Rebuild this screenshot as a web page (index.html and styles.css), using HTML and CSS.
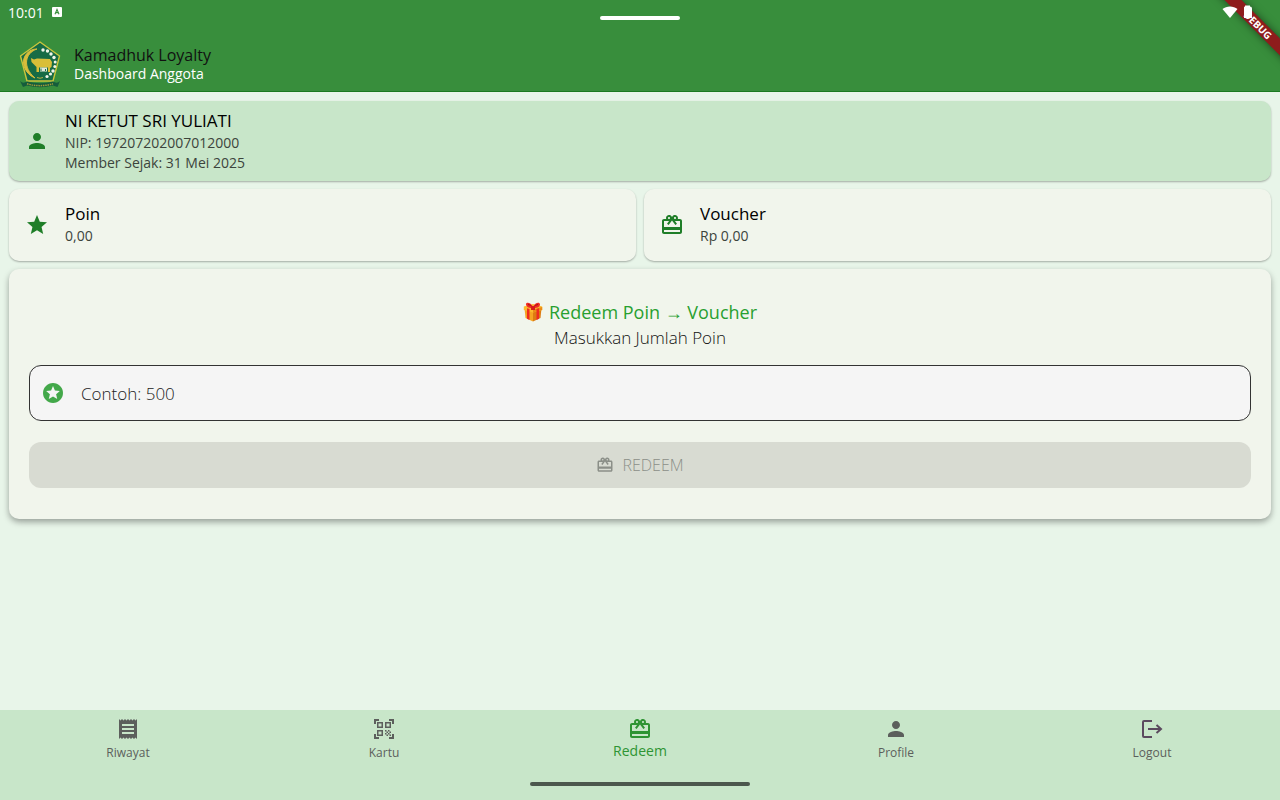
FILE: index.html
```html
<!DOCTYPE html>
<html lang="id">
<head>
  <meta charset="UTF-8">
  <meta name="viewport" content="width=device-width, initial-scale=1">
  <title>Kamadhuk Loyalty</title>
  <link rel="stylesheet" href="styles.css">
</head>
<body>
  <!-- shared icons -->
  <svg class="sprite" width="0" height="0" aria-hidden="true">
    <symbol id="i-person" viewBox="0 0 24 24"><path d="M12 12c2.21 0 4-1.79 4-4s-1.79-4-4-4-4 1.79-4 4 1.79 4 4 4zm0 2c-2.67 0-8 1.34-8 4v2h16v-2c0-2.66-5.33-4-8-4z"/></symbol>
    <symbol id="i-gift" viewBox="0 0 24 24"><path d="M20 6h-2.18c.11-.31.18-.65.18-1 0-1.66-1.34-3-3-3-1.05 0-1.96.54-2.5 1.35l-.5.67-.5-.68C10.96 2.54 10.05 2 9 2 7.34 2 6 3.34 6 5c0 .35.07.69.18 1H4c-1.11 0-1.99.89-1.99 2L2 19c0 1.11.89 2 2 2h16c1.11 0 2-.89 2-2V8c0-1.11-.89-2-2-2zm-5-2c.55 0 1 .45 1 1s-.45 1-1 1-1-.45-1-1 .45-1 1-1zM9 4c.55 0 1 .45 1 1s-.45 1-1 1-1-.45-1-1 .45-1 1-1zm11 15H4v-2h16v2zm0-5H4V8h5.08L7 10.83 8.62 12 12 7.4l3.38 4.6L17 10.83 14.92 8H20v6z"/></symbol>
  </svg>

  <div class="app">
    <header class="appbar">
      <div class="statusbar">
        <span>10:01</span>
        <svg width="10" height="10" viewBox="0 0 10 10"><rect width="10" height="10" rx="1" fill="#fff"/><path d="M3 7.2 5 2.4l2 4.8M3.8 5.6h2.4" fill="none" stroke="#388e3c" stroke-width="1.1"/></svg>
      </div>
      <span class="handle"></span>
      <svg class="sys-icons" width="32" height="14" viewBox="0 0 32 14" fill="#fff">
        <path d="M0.500 4C4.500 0.500 11.500 0.500 15.500 4L8 13z"/>
        <path d="M22 2.500Q22 1.500 23 1.500V.5h5v1q2 0 2 2V13h-8z"/>
      </svg>
      <div class="debug"><span>DEBUG</span></div>

      <div class="brand">
        <svg class="logo" width="42" height="48" viewBox="0 0 42 48">
          <path d="M21 2 40.500 16 34 41H8L1.500 16z" fill="#176b45" stroke="#c9c53c" stroke-width="1.400"/>
          <path d="M18 9C6 13 3 27 16 38C6 34 2 23 6 16C8.500 12 12 9 18 9z" fill="#d8bd3b" stroke="#d8bd3b" stroke-width="1"/>
          <path d="M12 18 15 19.500 18 18.500 31 19 33 22 32.500 27 31 28v4h-2v-4.500H20V32h-2.500v-5L15 24.500 12.500 22z" fill="#d9be38"/>
          <path d="M21 27.500h7v4h-7z" fill="#e4eadc"/>
          <path d="M22 31v-2.500M26.500 31v-2" stroke="#176b45" stroke-width="1"/>
          <g fill="#f1f5e9">
            <circle cx="24" cy="10" r="1.700"/><circle cx="28.500" cy="11" r="1.700"/><circle cx="32" cy="14" r="1.700"/>
            <circle cx="35" cy="17.500" r="1.700"/><circle cx="36.200" cy="22" r="1.500"/><circle cx="35.800" cy="26.500" r="1.500"/>
            <circle cx="34" cy="31" r="1.700"/><circle cx="31.500" cy="34" r="1.600"/><circle cx="28" cy="36.500" r="1.600"/>
          </g>
          <path d="M18 37.500q3 1.500 6 0" fill="none" stroke="#b8af3c"/>
          <path d="M1 41Q4 44 8 41.500Q21 45 34 41.500Q38 44 41 41L38.500 47L34 45.500Q21 49 8 45.500L4 47z" fill="#155c3c"/>
          <path d="M8 43.800Q21 47.500 34 43.800" fill="none" stroke="#a39a38" stroke-width="1.500" stroke-dasharray="1.500 .8"/>
        </svg>
        <div>
          <h1>Kamadhuk Loyalty</h1>
          <p>Dashboard Anggota</p>
        </div>
      </div>
    </header>

    <main>
      <section class="card member">
        <svg class="icon"><use href="#i-person"/></svg>
        <div>
          <h2>NI KETUT SRI YULIATI</h2>
          <p>NIP: 197207202007012000</p>
          <p>Member Sejak: 31 Mei 2025</p>
        </div>
      </section>

      <div class="balances">
        <section class="card">
          <svg class="icon" viewBox="0 0 24 24"><path d="M12 17.270 18.180 21l-1.640-7.030L22 9.240l-7.190-.61L12 2 9.190 8.630 2 9.240l5.460 4.730L5.820 21z"/></svg>
          <div>
            <h2>Poin</h2>
            <p>0,00</p>
          </div>
        </section>
        <section class="card">
          <svg class="icon"><use href="#i-gift"/></svg>
          <div>
            <h2>Voucher</h2>
            <p>Rp 0,00</p>
          </div>
        </section>
      </div>

      <form class="redeem">
        <h2>
          <svg width="20" height="20" viewBox="0 0 20 20">
            <path d="M1.500 6 10 8.500V19.500L2.500 16z" fill="#f5a523"/>
            <path d="M18.500 6 10 8.500V19.500l7.500-3.500z" fill="#dd7b12"/>
            <path d="M.8 4.500 10 2l9.200 2.500V8L10 10.500.8 8z" fill="#fdb92f"/>
            <path d="M10 7.500 19.200 5v3L10 10.500z" fill="#e98a16"/>
            <path d="M4 6.200 6.500 7v11L4 16.800zM13.500 7 16 6.200v10.600L13.500 18z" fill="#ee2b20"/>
            <path d="M10 5C8 0 2.500-.5 3 2.500S7 6 10 6c3 0 7-.5 7-3.500S12 0 10 5z" fill="#f02b24"/>
            <path d="M8.300 3.500Q5.500 1.300 5 2.300T8.300 4zM11.700 3.500Q14.500 1.300 15 2.300T11.700 4z" fill="#a90f16"/>
            <path d="M8 4h4v4H8z" fill="#d51c1c"/>
          </svg>
          <span>Redeem Poin → Voucher</span>
        </h2>
        <label for="poin">Masukkan Jumlah Poin</label>
        <div class="field">
          <svg class="icon" viewBox="0 0 24 24"><path d="M11.990 2C6.470 2 2 6.480 2 12s4.470 10 9.990 10C17.520 22 22 17.520 22 12S17.520 2 11.990 2z"/><path d="M16.230 18 12 15.450 7.770 18l1.120-4.810-3.730-3.230 4.920-.42L12 5l1.920 4.530 4.920.42-3.730 3.230z" fill="#f5f5f5"/></svg>
          <input type="text" id="poin" inputmode="numeric" placeholder="Contoh: 500">
        </div>
        <button type="submit" disabled>
          <svg width="18" height="18"><use href="#i-gift"/></svg>
          REDEEM
        </button>
      </form>
    </main>

    <nav>
      <a href="#riwayat">
        <svg class="icon" viewBox="0 0 24 24"><path d="M18 17H6v-2h12v2zm0-4H6v-2h12v2zm0-4H6V7h12v2zM3 22l1.500-1.500L6 22l1.500-1.500L9 22l1.500-1.500L12 22l1.500-1.500L15 22l1.500-1.500L18 22l1.500-1.500L21 22V2l-1.500 1.500L18 2l-1.500 1.500L15 2l-1.500 1.500L12 2l-1.500 1.500L9 2 7.500 3.500 6 2 4.500 3.500 3 2v20z"/></svg>
        Riwayat
      </a>
      <a href="#kartu">
        <svg class="icon" viewBox="0 0 24 24"><path d="M9.500 6.500v3h-3v-3h3M11 5H5v6h6V5zm-1.500 9.500v3h-3v-3h3M11 13H5v6h6v-6zm6.500-6.500v3h-3v-3h3M19 5h-6v6h6V5zm-6 8h1.500v1.500H13V13zm1.500 1.500H16V16h-1.500v-1.500zM16 13h1.500v1.500H16V13zm-3 3h1.500v1.500H13V16zm1.500 1.500H16V19h-1.500v-1.500zM16 16h1.500v1.500H16V16zm1.500-1.500H19V16h-1.500v-1.500zm0 3H19V19h-1.500v-1.500zM22 7h-2V4h-3V2h5v5zm0 15v-5h-2v3h-3v2h5zM2 22h5v-2H4v-3H2v5zM2 2v5h2V4h3V2H2z"/></svg>
        Kartu
      </a>
      <a href="#redeem" class="active">
        <svg class="icon"><use href="#i-gift"/></svg>
        Redeem
      </a>
      <a href="#profile">
        <svg class="icon"><use href="#i-person"/></svg>
        Profile
      </a>
      <a href="#logout">
        <svg class="icon" viewBox="0 0 24 24"><path d="M12 4H4q-1 0-1 1v14q0 1 1 1h8M8 12h13M16.500 8l4.500 4-4.500 4" fill="none" stroke="#5b4a5e" stroke-width="2"/></svg>
        Logout
      </a>
      <span class="gesture"></span>
    </nav>
  </div>
</body>
</html>
```
FILE: styles.css
```css
* {
  box-sizing: border-box;
}

body {
  margin: 0;
  font-family: "Open Sans", "Noto Sans", sans-serif;
  background: #e8f5e9;
  color: #111;
}

h1, h2, p {
  margin: 0;
  font-weight: 400;
}

.sprite {
  position: absolute;
}

.app {
  display: flex;
  flex-direction: column;
  min-height: 100vh;
}

.icon {
  width: 24px;
  height: 24px;
  flex: none;
  fill: currentColor;
}

/* header */
.appbar {
  position: relative;
  overflow: hidden;
  background: #388e3c;
  border-bottom: 1px solid #1b7a20;
  color: #fff;
}

.statusbar {
  display: flex;
  align-items: center;
  gap: 8px;
  height: 24px;
  padding: 0 8px;
  font-size: 14px;
}

.handle {
  position: absolute;
  top: 16px;
  left: 50%;
  width: 80px;
  height: 4px;
  margin-left: -40px;
  border-radius: 2px;
  background: #fff;
}

.sys-icons {
  position: absolute;
  top: 5px;
  right: 26px;
  z-index: 1;
}

.debug {
  position: absolute;
  top: 19px;
  right: -32px;
  width: 108px;
  transform: rotate(45deg);
  background: #8e1c1c;
  box-shadow: 0 0 8px rgba(0, 0, 0, 0.5);
  font-size: 10px;
  font-weight: 700;
  line-height: 12px;
  text-align: center;
}

.brand {
  display: flex;
  align-items: center;
  gap: 13px;
  height: 67px;
  padding: 13px 19px 0;
}

.brand h1 {
  font-size: 16px;
  line-height: 20px;
  color: #111;
}

.brand p {
  font-size: 14px;
  line-height: 18px;
}

/* content */
main {
  flex: 1;
  display: flex;
  flex-direction: column;
  gap: 8px;
  padding: 9px;
}

.card {
  display: flex;
  align-items: center;
  gap: 16px;
  min-height: 72px;
  padding: 8px 16px;
  border-radius: 10px;
  background: #f1f5ec;
  box-shadow: 0 1px 2px rgba(0, 0, 0, 0.3);
}

.card .icon {
  color: #1f7e28;
}

.card h2 {
  font-size: 17px;
  line-height: 24px;
  color: #000;
}

.card p {
  font-size: 14px;
  line-height: 20px;
  color: #3c443c;
}

.member {
  min-height: 80px;
  background: #c8e6c9;
}

.balances {
  display: grid;
  grid-template-columns: 1fr 1fr;
  gap: 8px;
}

.balances p {
  padding-bottom: 2px;
}

.redeem {
  display: flex;
  flex-direction: column;
  padding: 29px 20px 31px;
  border-radius: 10px;
  background: #f1f5ec;
  box-shadow: 0 3px 6px rgba(0, 0, 0, 0.35);
}

.redeem h2 {
  display: flex;
  align-items: center;
  justify-content: center;
  gap: 6px;
  font-size: 18px;
  line-height: 28px;
  color: #28a030;
}

.redeem label {
  font-size: 17px;
  font-weight: 300;
  line-height: 24px;
  text-align: center;
}

.field {
  display: flex;
  align-items: center;
  gap: 16px;
  height: 56px;
  margin: 15px 0 21px;
  padding: 0 11px;
  border: 1px solid #333;
  border-radius: 12px;
  background: #f5f5f5;
}

.field .icon {
  color: #43a84a;
}

.field input {
  flex: 1;
  min-width: 0;
  padding: 0;
  border: 0;
  outline: 0;
  background: none;
  font: 300 17px "Open Sans", sans-serif;
}

.field input::placeholder {
  color: #222;
  opacity: 1;
}

.redeem button {
  display: flex;
  align-items: center;
  justify-content: center;
  gap: 8px;
  height: 46px;
  border: 0;
  border-radius: 12px;
  background: #d8dbd2;
  color: #8b8f88;
  font: 300 16px "Open Sans", sans-serif;
}

.redeem button svg {
  fill: currentColor;
}

/* bottom navigation */
nav {
  position: relative;
  display: grid;
  grid-template-columns: repeat(5, 1fr);
  height: 90px;
  padding-top: 7px;
  background: #c8e6c9;
}

nav a {
  display: flex;
  flex-direction: column;
  align-items: center;
  color: #5c5f5c;
  font-size: 12px;
  line-height: 24px;
  text-decoration: none;
}

nav a.active {
  color: #2e9433;
  font-size: 14px;
  line-height: 20px;
}

.gesture {
  position: absolute;
  bottom: 14px;
  left: 50%;
  width: 220px;
  height: 4px;
  margin-left: -110px;
  border-radius: 2px;
  background: #4c584d;
}
```
